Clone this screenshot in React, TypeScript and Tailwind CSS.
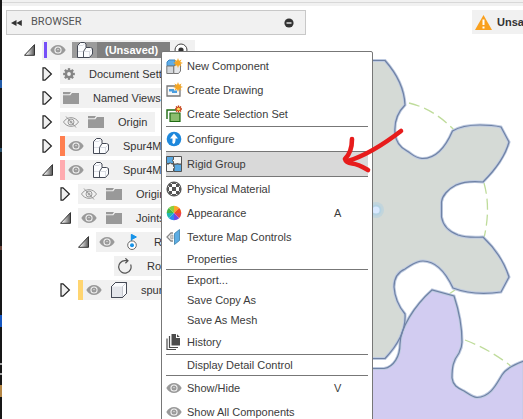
import React from "react";

type IconProps = { className?: string };

const Eye = ({ className = "w-4" }: IconProps) => (
  <svg viewBox="0 0 16 12" className={`${className} h-3 shrink-0`}>
    <path d="M.3 6C4-.8 12-.8 15.700 6 12 12.800 4 12.800.3 6Z" fill="#9a9a9a" />
    <circle cx="8" cy="6" r="3.600" fill="#f3f3f3" />
    <circle cx="8" cy="6" r="2.500" fill="#9a9a9a" />
    <circle cx="8" cy="5.600" r="0.700" fill="#f3f3f3" />
  </svg>
);

const EyeOff = () => (
  <svg viewBox="0 0 16 12" className="h-3 w-4 shrink-0" fill="none" stroke="#9a9a9a">
    <path d="M.5 6C4 .2 12 .2 15.500 6 12 11.800 4 11.800.5 6Z" />
    <circle cx="8" cy="6" r="3" />
    <circle cx="8" cy="6" r="1" />
    <path d="M3 .5 13 11.500" />
  </svg>
);

const Folder = () => (
  <svg viewBox="0 0 16 14" className="h-3.5 w-4 shrink-0" fill="#999">
    <path d="M0 1h8l-1.500 2.200H0ZM0 4.200h7.300L9 2h7v11H0Z" />
  </svg>
);

const Gear = () => (
  <svg viewBox="-7 -7 14 14" className="h-3.5 w-3 shrink-0 overflow-visible">
    <circle r="3.600" fill="none" stroke="#858585" strokeWidth="2.800" />
    {[0, 45, 90, 135, 180, 225, 270, 315].map((a) => (
      <rect key={a} x="-1.400" y="-6.800" width="2.800" height="3" fill="#858585" transform={`rotate(${a})`} />
    ))}
  </svg>
);

const Component = () => (
  <svg viewBox="0 0 16 16" className="h-4 w-4 shrink-0" strokeLinejoin="round">
    <path d="M.5 3.500 3.500.5H7.500L9 2V5.500H13.500L15.500 6.500V12L12.500 15.500H.5Z" fill="#fbfcfe" />
    <path d="M7 8.500 9 5.500H13.500L15.500 6.500 12.500 8.500Z" fill="#fff" />
    <path d="M.8 9.500H6.500M6.500 15V9.500L9 6M1 3.500H5.500L8 1.500M12.500 9.500V15M7 9.500h5.500L15 7" fill="none" stroke="#ccd0d9" strokeWidth=".7" />
    <path d="M.5 3.500 3.500.5H7.500L9 2V5.500H13.500L15.500 6.500V12L12.500 15.500H.5Z" fill="none" stroke="#444955" />
    <path d="M6.500 15.500V9.500L9 5.500" fill="none" stroke="#444955" strokeWidth=".9" />
  </svg>
);

const Body = () => (
  <svg viewBox="0 0 16 16" className="h-4 w-4 shrink-0" stroke="#444955" strokeLinejoin="round">
    <path d="M.5 4.500 4.500.5h11v11l-4 4H.5Z" fill="#fafbfd" />
    <path d="M1 4.500h10.500V15H1Z" fill="#e4e6eb" stroke="none" />
    <path d="M11.500 4.500V15M11.500 4.500l4-4" stroke="#b4b7c0" strokeWidth=".7" />
    <path d="M.5 4.500 4.500.5h11v11l-4 4H.5Z" fill="none" />
  </svg>
);

const Joint = () => (
  <svg viewBox="0 0 16 16" className="h-4 w-4 shrink-0">
    <path d="M7.400 8V.5M7.400.3l5 2.700-5 2.700Z" fill="#1793e8" stroke="#1793e8" />
    <circle cx="8" cy="11.200" r="4.300" fill="#fff" stroke="#666" />
    <circle cx="8" cy="11.200" r="2" fill="#1793e8" />
  </svg>
);

const Rotate = () => (
  <svg viewBox="0 0 16 16" className="h-4 w-4 shrink-0" fill="none" stroke="#555" strokeWidth="1.200">
    <path d="M10.500 2.700H8A6.200 6.200 0 1 0 13.600 6.500M8.400.3 11 2.800 8.400 5.300" />
  </svg>
);

const Toggle = ({ open }: { open: boolean }) => (
  <svg viewBox="0 0 12 14" className="h-3.5 w-3 shrink-0">
    <defs>
      <linearGradient id="fold" x1="0" y1="0" x2="1" y2="0">
        <stop offset=".25" stopColor="#eee" />
        <stop offset="1" stopColor="#555" />
      </linearGradient>
    </defs>
    {open ? (
      <path d="M.5 12.300 10.500 1.600v10.700Z" fill="url(#fold)" stroke="#333" />
    ) : (
      <path d="M1 .8h2L9.400 7 3 13.200H1Z" fill="#f0f0f0" stroke="#222" strokeWidth="1.200" />
    )}
  </svg>
);

type Node = {
  label: string;
  indent: string;
  open?: boolean;
  bar?: string;
  eye?: "on" | "off";
  icon: React.ReactNode;
  fit?: boolean;
};

const nodes: Node[] = [
  { label: "Document Settings", indent: "pl-9", open: false, icon: <Gear /> },
  { label: "Named Views", indent: "pl-9", open: false, icon: <Folder /> },
  { label: "Origin", indent: "pl-9", open: false, eye: "off", icon: <Folder />, fit: true },
  { label: "Spur4Module", indent: "pl-9", open: false, bar: "bg-[#ff7f50]", eye: "on", icon: <Component /> },
  { label: "Spur4Module", indent: "pl-9", open: true, bar: "bg-[#ffabb0]", eye: "on", icon: <Component /> },
  { label: "Origin", indent: "pl-[54px]", open: false, eye: "off", icon: <Folder /> },
  { label: "Joints", indent: "pl-[54px]", open: true, eye: "on", icon: <Folder /> },
  { label: "Rev1", indent: "pl-[72px]", open: true, eye: "on", icon: <Joint /> },
  { label: "Rotate", indent: "pl-[90px]", icon: <Rotate /> },
  { label: "spur", indent: "pl-[54px]", open: false, bar: "bg-[#ffd570]", eye: "on", icon: <Body /> },
];

function TreeRow({ node }: { node: Node }) {
  return (
    <li className={`flex h-5 items-center ${node.indent}`}>
      <button className="flex w-[18px] shrink-0" aria-label={`Toggle ${node.label}`}>
        {node.open !== undefined && <Toggle open={node.open} />}
      </button>
      <div className={`flex h-5 items-center bg-[#f1f1f1] ${node.fit ? "pr-2" : "flex-1"}`}>
        {node.bar && <span className={`h-5 w-[5px] shrink-0 ${node.bar}`} />}
        <span className="flex items-center gap-[9px] pl-[3px] pr-3.5">
          {node.eye === "on" && <Eye />}
          {node.eye === "off" && <EyeOff />}
          {node.icon}
        </span>
        <span className="whitespace-nowrap">{node.label}</span>
      </div>
    </li>
  );
}

const Star = () => (
  <path d="m12 0 1 2.800 2.600-1.300-1.300 2.600L17 5l-2.700 1 1.300 2.600L13 7.300l-1 2.700-1-2.700-2.600 1.300L9.700 6 7 5l2.700-1L8.400 1.500 11 2.800Z" fill="#f5a623" />
);

const NewComponentIcon = () => (
  <svg viewBox="0 0 17 17" className="h-[17px] w-[17px] overflow-visible">
    <path d="M1 4 3 2h6v6H1Z" fill="#5fade8" stroke="#3c88c4" />
    <path d="M.8 8h7v7.500h-7Z" fill="#d5d8dc" stroke="#777" />
    <path d="M7.800 8 10 6.500h4.500V13L12.500 15.500H7.800Z" fill="#e5e7ea" stroke="#777" />
    <Star />
  </svg>
);

const DrawingIcon = () => (
  <svg viewBox="0 0 17 17" className="h-[17px] w-[17px] overflow-visible">
    <path d="M1 4h13v10H1Z" fill="#f7f7f7" stroke="#777" strokeWidth="1.300" />
    <path d="M3 7h5v1.500h3V11H6V9.500H3Z" fill="#4a9ee0" />
    <Star />
  </svg>
);

const SelectionIcon = () => (
  <svg viewBox="0 0 17 17" className="h-[17px] w-[17px] overflow-visible">
    <path d="M1 13V4h9" fill="none" stroke="#1f6b12" strokeWidth="1.400" />
    <path d="M4 7h10v8.500H4Z" fill="#8bbd6e" stroke="#1f6b12" strokeWidth="1.200" />
    <path d="M12.500-.5v7M9 3h7M10 .5l5 5m0-5-5 5" stroke="#c43b10" strokeWidth="1.400" />
    <circle cx="12.500" cy="3" r="1.500" fill="#ffe45c" />
  </svg>
);

const ConfigureIcon = () => (
  <svg viewBox="0 0 16 16" className="h-4 w-4">
    <circle cx="8" cy="8" r="7.300" fill="#1e88dc" />
    <path d="M8 2.500 12 7.500H9.500v2Q9.500 12 7.500 13 5.500 12 6.500 10V7.500H4Z" fill="#fff" />
  </svg>
);

const RigidIcon = () => (
  <svg viewBox="0 0 16 16" className="h-4 w-4 overflow-visible" stroke="#555" strokeWidth="1">
    <path d="M.5.5h7v7h-7ZM8 8h7.500v7.500H8Z" fill="#59a9e2" />
    <path d="M7.500.5h8V8h-3l-1-1-1 1h-3V5.500L6 4.500l1.500-1ZM.5 8h2.500l1-1.500L5.500 8h2v2.500l1.500 1-1.500 1v3h-7Z" fill="#f5f5f5" />
  </svg>
);

const MaterialIcon = () => (
  <svg viewBox="0 0 16 16" className="h-4 w-4">
    <defs>
      <clipPath id="ball">
        <circle cx="8" cy="8" r="7" />
      </clipPath>
    </defs>
    <circle cx="8" cy="8" r="7" fill="#fff" />
    <path clipPath="url(#ball)" d="M6 0h4v3H6ZM3 3h3v3H3ZM10 3h3v3h-3ZM6 6h4v4H6ZM0 6h3v4H0ZM13 6h3v4h-3ZM3 10h3v3H3ZM10 10h3v3h-3ZM6 13h4v3H6Z" fill="#555" />
    <circle cx="8" cy="8" r="7" fill="none" stroke="#555" strokeWidth="1.200" />
  </svg>
);

const AppearanceIcon = () => (
  <svg viewBox="-8 -8 16 16" className="h-4 w-4">
    {["#f9a825", "#f4511e", "#e84057", "#7048e8", "#2a8cf0", "#21b8b0", "#43b84a", "#8bcf3f"].map((c, i) => (
      <path key={c} d="M0 0V-7.300A7.300 7.300 0 0 1 5.160-5.160Z" fill={c} transform={`rotate(${i * 45})`} />
    ))}
  </svg>
);

const TextureIcon = () => (
  <svg viewBox="0 0 16 16" className="h-4 w-4" fill="none">
    <path d="M7 4H5L1 8l4 4h2" stroke="#888" strokeWidth="1.300" />
    <path d="M5 6h2v4H5L4 8Z" fill="#ccc" stroke="#999" strokeWidth=".6" />
    <path d="m8.500 4.500 5-4v11l-5 4Z" fill="#5cade4" stroke="#397da8" strokeWidth=".8" />
  </svg>
);

const HistoryIcon = () => (
  <svg viewBox="0 0 16 16" className="h-4 w-4">
    <path d="M5.500 0H10v4h4v7.500H5.500Z M11 .2 13.800 3H11Z" fill="#4c4c4c" />
    <path d="M3.500 2v11.500H12M1 4.500v11h9" fill="none" stroke="#4c4c4c" strokeWidth="1.200" />
  </svg>
);

type Item = { label: string; icon?: React.ReactNode; shortcut?: string; active?: boolean; short?: boolean };

const groups: Item[][] = [
  [
    { label: "New Component", icon: <NewComponentIcon /> },
    { label: "Create Drawing", icon: <DrawingIcon /> },
    { label: "Create Selection Set", icon: <SelectionIcon /> },
  ],
  [
    { label: "Configure", icon: <ConfigureIcon /> },
    { label: "Rigid Group", icon: <RigidIcon />, active: true },
    { label: "Physical Material", icon: <MaterialIcon /> },
    { label: "Appearance", icon: <AppearanceIcon />, shortcut: "A" },
    { label: "Texture Map Controls", icon: <TextureIcon /> },
    { label: "Properties", short: true },
  ],
  [
    { label: "Export...", short: true },
    { label: "Save Copy As", short: true },
    { label: "Save As Mesh", short: true },
    { label: "History", icon: <HistoryIcon /> },
  ],
  [{ label: "Display Detail Control", short: true }],
  [
    { label: "Show/Hide", icon: <Eye />, shortcut: "V" },
    { label: "Show All Components", icon: <Eye /> },
  ],
];

function ContextMenu() {
  return (
    <div
      role="menu"
      className="absolute left-[161px] top-[51px] w-[212px] rounded-t-xs border border-[#777] bg-white px-1 pt-0.5 text-[11px] text-[#3c3c3c]"
    >
      {groups.map((items, i) => (
        <div key={i} className={i > 0 ? "border-t border-[#777]" : ""}>
          {items.map((item) => (
            <button
              key={item.label}
              role="menuitem"
              className={`flex w-full items-center text-left ${item.short ? "h-5" : item.active ? "h-[26px] border-y border-[#777] bg-[#d9d9d9]" : "h-6"}`}
            >
              <span className="flex w-[21px] shrink-0 items-center">{item.icon}</span>
              <span className="flex-1 whitespace-nowrap">{item.label}</span>
              {item.shortcut && <span className="w-[34px]">{item.shortcut}</span>}
            </button>
          ))}
        </div>
      ))}
    </div>
  );
}

const gearOne =
  "M350 60.500H385Q404 82 405 105C398 112 394 121 395 133C396 145 403 149 407 151C412 154 415 158 422 158.500C436 159 446 146 452.500 131C459 127 469 125 480 125Q492 125 501 127L509 142Q504 161 483 182C473 181 463 182 456 185C448 189 442 196 441.500 202V217C443 226 450 232 458 235Q467 238 483 237Q502 255 509 277L501 292Q474 296 453 288C445 271 436 261 423 261C415 261 412 265 405 269C398 272 394 278 394 287Q395 302 405 314C406 329 398 345 385 358.500H350Z";
const gearTwo =
  "M350 368.500H384C394 367 400 356 400 344C400 329 414 306 432 290L454 296Q462 320 462 342Q462 347 459 353C453 361 452 367 452 378C453 386 458 388 464 391C469 394 472 397 477 397.500C491 397 497 383 502 375Q507 367 524 361V440H350Z";

const Canvas = () => (
  <svg viewBox="0 0 523 419" className="absolute left-0 top-0 h-[419px] w-[523px]" aria-hidden="true">
    <g fill="none" stroke="#bfdc9b" strokeWidth="1.300" strokeDasharray="11 5">
      <path d="M409 103Q434 109 454 130" />
      <path d="M484 183Q491 208 484 238" />
      <path d="M465 340Q491 350 512 367" />
      <path d="M449 294 455 290" />
    </g>
    <path d={gearOne} fill="#d5dad6" stroke="#becae0" strokeWidth="3" />
    <path d={gearTwo} fill="#d2ccf1" stroke="#becae0" strokeWidth="3" />
    <path d={gearTwo} fill="none" stroke="#6f82a5" strokeWidth="1.200" />
    <path d={gearOne} fill="none" stroke="#6f82a5" strokeWidth="1.200" />
    <circle cx="376" cy="210" r="8" fill="#c2d5dc" />
    <circle cx="376" cy="210" r="5.500" fill="#b4d2e2" />
    <circle cx="376" cy="210" r="3.600" fill="#d9e9ff" />
  </svg>
);

const Arrow = () => (
  <svg viewBox="0 0 70 50" className="pointer-events-none absolute left-[340px] top-[125px] h-[50px] w-[70px]" aria-hidden="true">
    <path d="M61 6Q31 29 8 36M12 14Q12 27 5 34 6 38 12 38.500T28 45" fill="none" stroke="#e71c1c" strokeWidth="4.600" strokeLinecap="round" strokeLinejoin="round" />
  </svg>
);

export default function App() {
  return (
    <main className="relative flex h-screen overflow-hidden bg-white font-['Liberation_Sans',Arial,sans-serif] text-[11px] text-[#333]">
      <Canvas />
      <aside className="relative flex w-0.5 shrink-0 flex-col bg-[#171717]">
        <span className="mt-20 h-2 bg-[#225ba8]" />
        <span className="mt-[60px] h-1 bg-[#29506b]" />
        <span className="mt-[94px] h-1 bg-[#674237]" />
        <span className="mt-[65px] h-3 bg-[#1556c0]" />
        <span className="mt-9 h-3 border-y-2 border-[#aaa]" />
        <span className="mt-2.5 h-3 bg-[#b48645]" />
      </aside>
      <div className="relative min-w-0 flex-1">
        <div className="h-1.5 bg-[#f1f1f1] pt-0.5">
          <div className="h-px bg-[#d8d8d8]" />
        </div>
        <header className="flex justify-between pl-1 pt-1">
          <div className="flex h-[25px] w-[300px] shrink-0 items-center border border-[#c8c8c8] bg-[#f1f1f1] pl-1">
            <button aria-label="Collapse browser">
              <svg viewBox="0 0 11 8" className="h-2 w-[11px]" fill="#333">
                <path d="M5.500 1v6L0 4ZM10.800 1v6L5.300 4Z" />
              </svg>
            </button>
            <h1 className="flex-1 pl-[9px] font-['Roboto','Liberation_Sans',sans-serif] text-[#555]">BROWSER</h1>
            <button className="pr-[11px]" aria-label="Minimize">
              <svg viewBox="0 0 10 10" className="h-2.5 w-2.5">
                <circle cx="5" cy="5" r="4.600" fill="#333" />
                <path d="M2.500 5h5" stroke="#fff" strokeWidth="1.300" />
              </svg>
            </button>
          </div>
          <div className="flex h-6 w-[51px] items-center gap-[5px] overflow-hidden bg-[#f1f1f1] pl-[3px] font-bold">
            <svg viewBox="0 0 17 15" className="h-[15px] w-[17px] shrink-0">
              <path d="M8.500 0 17 15H0Z" fill="#f9a01e" />
              <path d="M8.500 4.500v5.500M8.500 11.500v2" stroke="#fff" strokeWidth="2" />
            </svg>
            <span>Unsaved</span>
          </div>
        </header>
        <ul className="flex w-[210px] flex-col gap-1 pt-[5px] pl-1">
          <li className="flex h-5 items-center pl-[18px]">
            <button className="flex w-[18px] shrink-0" aria-label="Toggle root">
              <Toggle open />
            </button>
            <div className="flex h-5 w-[153px] items-center bg-[#f1f1f1] pl-0.5">
              <span className="h-4 w-[3px] bg-[#7650f8]" />
              <span className="px-[3px]">
                <Eye />
              </span>
              <span className="ml-[3px] flex h-4 w-[25px] items-center justify-center bg-[#9b9b9b]">
                <Component />
              </span>
              <span className="flex h-4 w-[73px] items-center bg-[#808080] pl-2 font-bold text-white">
                (Unsaved)
              </span>
              <svg viewBox="0 0 14 14" className="ml-1 h-3.5 w-3.5">
                <circle cx="7" cy="7" r="6" fill="#fff" stroke="#444" />
                <circle cx="7" cy="7" r="2.600" fill="#333" />
              </svg>
            </div>
          </li>
          {nodes.map((node, i) => (
            <TreeRow key={i} node={node} />
          ))}
        </ul>
      </div>
      <ContextMenu />
      <Arrow />
    </main>
  );
}
